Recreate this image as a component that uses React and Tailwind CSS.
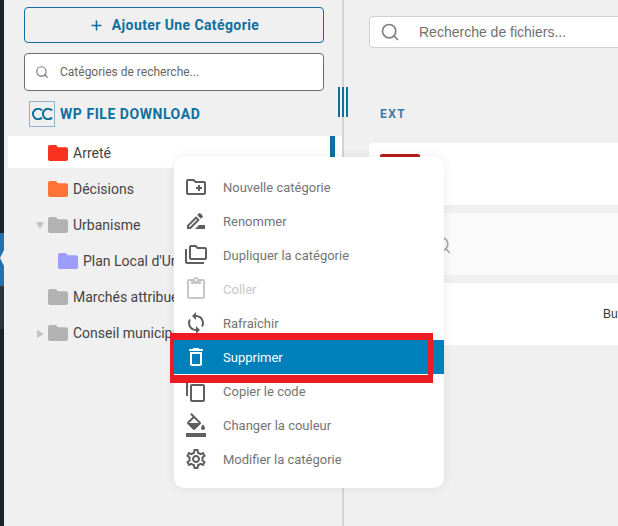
import { Plus, Search } from 'lucide-react'
import {
  MdOutlineCreateNewFolder,
  MdOutlineDriveFileRenameOutline,
  MdOutlineFolderCopy,
  MdOutlineContentPaste,
  MdSync,
  MdOutlineDelete,
  MdContentCopy,
  MdFormatColorFill,
  MdOutlineSettings,
} from 'react-icons/md'

function Folder({ color, className = '' }) {
  return (
    <svg viewBox="0 0 20 16" width="20" height="16" className={className}>
      <path fill={color} d="M2 0h6l2 2.200h8a2 2 0 0 1 2 2v9.800a2 2 0 0 1-2 2h-16a2 2 0 0 1-2-2v-12a2 2 0 0 1 2-2z" />
    </svg>
  )
}

function TreeRow({ color, label, indent, active }) {
  return (
    <div className={`flex h-8 items-center whitespace-nowrap pt-[2px] ${active ? 'bg-white' : ''} ${indent ? 'pl-[50px]' : 'pl-[40px]'}`}>
      <Folder color={color} className="mr-[5px] shrink-0" />
      <span className="text-[14px] text-[#444]">{label}</span>
    </div>
  )
}

const ITEMS = [
  [MdOutlineCreateNewFolder, 'Nouvelle catégorie'],
  [MdOutlineDriveFileRenameOutline, 'Renommer'],
  [MdOutlineFolderCopy, 'Dupliquer la catégorie'],
  [MdOutlineContentPaste, 'Coller', 'disabled'],
  [MdSync, 'Rafraîchir'],
  [MdOutlineDelete, 'Supprimer', 'active'],
  [MdContentCopy, 'Copier le code'],
  [MdFormatColorFill, 'Changer la couleur'],
  [MdOutlineSettings, 'Modifier la catégorie'],
]

function MenuRow({ Icon, label, state }) {
  const tone = state === 'active' ? 'bg-[#0080bb] text-white' : state === 'disabled' ? 'text-[#c8c8c8]' : 'text-[#757575]'
  return (
    <div className={`flex h-[34px] items-center ${tone}`}>
      <span className={`ml-[10px] mr-[15px] flex w-[24px] justify-center ${state ? '' : 'text-[#5f5f5f]'}`}>
        <Icon size={24} />
      </span>
      <span className="pt-[2px] text-[13px]">{label}</span>
    </div>
  )
}

export default function App() {
  return (
    <div className="relative flex h-[526px] w-[618px] overflow-hidden bg-[#f0f0f0] font-['Roboto',sans-serif]">
      {/* wp admin strip */}
      <div className="relative w-[4px] shrink-0 bg-[#1d2327]">
        <div className="absolute left-0 top-[233px] h-[53px] w-[4px] bg-[#2271b1]" />
        <div className="absolute left-0 top-[286px] h-[43px] w-[4px] bg-[#2c3338]" />
        <div className="absolute left-0 top-[250px] h-0 w-0 border-y-[8px] border-r-[4px] border-y-transparent border-r-[#f0f0f0]" />
      </div>

      {/* left column */}
      <div className="relative w-[340px] shrink-0 border-r-2 border-[#d4d4d4] pt-[7px]">
        <div className="ml-[20px] w-[300px]">
          <div className="flex h-[36px] items-center justify-center gap-[8px] rounded-[4px] border border-[#0f6f9f] text-[14px] font-bold tracking-[0.4px] text-[#0f6f9f]">
            <Plus size={15} strokeWidth={2.5} />
            Ajouter Une Catégorie
          </div>
          <div className="mt-[10px] flex h-[38px] items-center rounded-[4px] border border-[#6b6b6b] bg-white pl-[10px]">
            <Search size={14} className="text-[#777]" />
            <span className="ml-[11px] text-[12px] text-[#666]">Catégories de recherche...</span>
          </div>
        </div>
        <div className="ml-[25px] mt-[10px] flex h-[26px] items-center gap-[5px]">
          <div className="flex h-[26px] w-[26px] items-center justify-center border border-[#8fb5cc]">
            <svg width="22" height="12" viewBox="0 0 22 12" fill="none" stroke="#0f6f9f" strokeWidth="2">
              <path d="M11 2.500a5.200 5.200 0 1 0 0 7" />
              <path d="M21 2.500a5.200 5.200 0 1 0 0 7" />
            </svg>
          </div>
          <span className="text-[14px] font-bold tracking-[0.55px] text-[#0f6f9f]">WP FILE DOWNLOAD</span>
        </div>
        <div className="relative ml-[4px] mt-[9px]">
          <div className="absolute right-[7px] top-0 h-[32px] w-[5px] bg-[#0f6f9f]" />
          <TreeRow color="#f9321f" label="Arreté" active />
          <div className="mt-[4px]">
            <TreeRow color="#ff7336" label="Décisions" />
          </div>
          <div className="relative mt-[4px]">
            <span className="absolute left-[28px] top-[14px] h-0 w-0 border-x-[4px] border-t-[7px] border-x-transparent border-t-[#c4c4c4]" />
            <TreeRow color="#b2b2b2" label="Urbanisme" />
          </div>
          <div className="mt-[4px]">
            <TreeRow color="#9d9dff" label="Plan Local d'Urbanisme" indent />
          </div>
          <div className="mt-[4px]">
            <TreeRow color="#b2b2b2" label="Marchés attribués" />
          </div>
          <div className="relative mt-[4px]">
            <span className="absolute left-[29px] top-[14px] h-0 w-0 border-y-[4px] border-l-[7px] border-y-transparent border-l-[#c4c4c4]" />
            <TreeRow color="#b2b2b2" label="Conseil municipal" />
          </div>
        </div>
        {/* resize handle */}
        <div className="absolute right-[-6px] top-[87px] flex h-[30px] gap-[2px]">
          <span className="w-[2px] bg-[#0f6f9f]" />
          <span className="w-[2px] bg-[#0f6f9f]" />
          <span className="w-[2px] bg-[#0f6f9f]" />
        </div>
      </div>

      {/* right column */}
      <div className="min-w-0 flex-1 pl-[25px] pt-[16px] font-['Liberation_Sans',sans-serif]">
        <div className="flex h-[32px] w-[300px] items-center rounded-[4px] border border-[#cfcfcf] bg-white pl-[10px]">
          <Search size={20} className="text-[#808080]" />
          <span className="ml-[19px] text-[14px] text-[#6f6f6f]">Recherche de fichiers...</span>
        </div>
        <div className="mt-[57px] pl-[11px] font-['Roboto',sans-serif] text-[12px] font-bold tracking-[1.5px] text-[#3c7aa6]">EXT</div>
        <div className="mt-[20px] flex w-[300px] flex-col gap-[8px]">
          <div className="h-[62px] rounded-tl-[4px] bg-white pl-[11px] pt-[11px]">
            <div className="h-[20px] w-[40px] rounded-t-[2px] bg-[#b51c1c]" />
          </div>
          <div className="h-[62px] bg-[#fafafa] pl-[63px] pt-[22px]">
            <Search size={20} className="text-[#aaa]" />
          </div>
          <div className="flex h-[62px] items-center rounded-bl-[4px] bg-white pl-[234px] text-[12px] text-[#333]">Bu</div>
        </div>
      </div>

      {/* context menu */}
      <div className="absolute left-[174px] top-[157px] w-[270px] rounded-[10px] bg-white pb-[12px] pt-[13px] shadow-[0_0_12px_rgba(0,0,0,0.08)]">
        {ITEMS.map(([Icon, label, state]) => (
          <MenuRow key={label} Icon={Icon} label={label} state={state} />
        ))}
      </div>

      {/* annotation */}
      <div className="absolute left-[170px] top-[333px] h-[50px] w-[263px] border-b-[8px] border-l-[4px] border-r-[5px] border-t-[7px] border-[#ed1c24]" />
    </div>
  )
}
